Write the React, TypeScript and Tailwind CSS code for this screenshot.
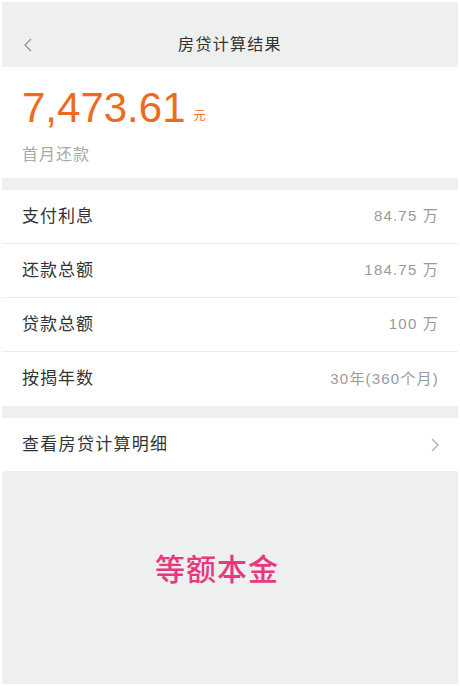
import React from 'react';

const rows = [
  { label: '支付利息', value: '84.75 万' },
  { label: '还款总额', value: '184.75 万' },
  { label: '贷款总额', value: '100 万' },
  { label: '按揭年数', value: '30年(360个月)' },
];

const font = { fontFamily: '"Liberation Sans", "Noto Sans CJK SC", sans-serif' };

export default function App() {
  return (
    <div className="w-[460px] h-[686px] bg-white p-[2px]" style={font}>
      <div className="flex h-full flex-col bg-[#eeefef]">
        {/* Header */}
        <div className="relative flex h-[65px] items-end justify-center pb-[10px]">
          <svg className="absolute left-[20px] top-[35px]" width="12" height="16" viewBox="0 0 12 16" fill="none">
            <path d="M9 2 L3 8 L9 14" stroke="#9a9a9a" strokeWidth="1.4" />
          </svg>
          <span className="text-[16px] tracking-[1.3px] text-[#333]">房贷计算结果</span>
        </div>

        {/* First month payment */}
        <div className="flex h-[111px] flex-col bg-white px-[20px] pt-[20px]">
          <div className="flex items-end">
            <span className="text-[42px] leading-[42px] text-[#f06a1e]">7,473.61</span>
            <span className="mb-[4px] ml-[8px] text-[12px] text-[#f06a1e]">元</span>
          </div>
          <span className="mt-[14px] text-[16px] tracking-[1px] text-[#a8a8a8]">首月还款</span>
        </div>

        {/* Details */}
        <div className="mt-[12px] bg-white">
          {rows.map((r, i) => (
            <div
              key={r.label}
              className={`flex h-[54px] items-center justify-between pl-[20px] pr-[19px] ${i < rows.length - 1 ? 'border-b border-[#ececec]' : ''}`}
            >
              <span className="text-[17px] tracking-[1px] text-[#333]">{r.label}</span>
              <span className="text-[15px] tracking-[1.2px] text-[#9a9a9a]">{r.value}</span>
            </div>
          ))}
        </div>

        {/* Link row */}
        <div className="mt-[12px] flex h-[53px] items-center justify-between bg-white pl-[20px] pr-[18px]">
          <span className="text-[17px] tracking-[1.3px] text-[#333]">查看房贷计算明细</span>
          <svg width="10" height="16" viewBox="0 0 10 16" fill="none">
            <path d="M2 2 L8 8 L2 14" stroke="#b0b0b0" strokeWidth="1.4" />
          </svg>
        </div>

        {/* Method */}
        <div className="flex flex-1 items-center justify-center pb-[16px] pr-[26px]">
          <span className="text-[30px] tracking-[1px] font-medium text-[#e6397f]">等额本金</span>
        </div>
      </div>
    </div>
  );
}
